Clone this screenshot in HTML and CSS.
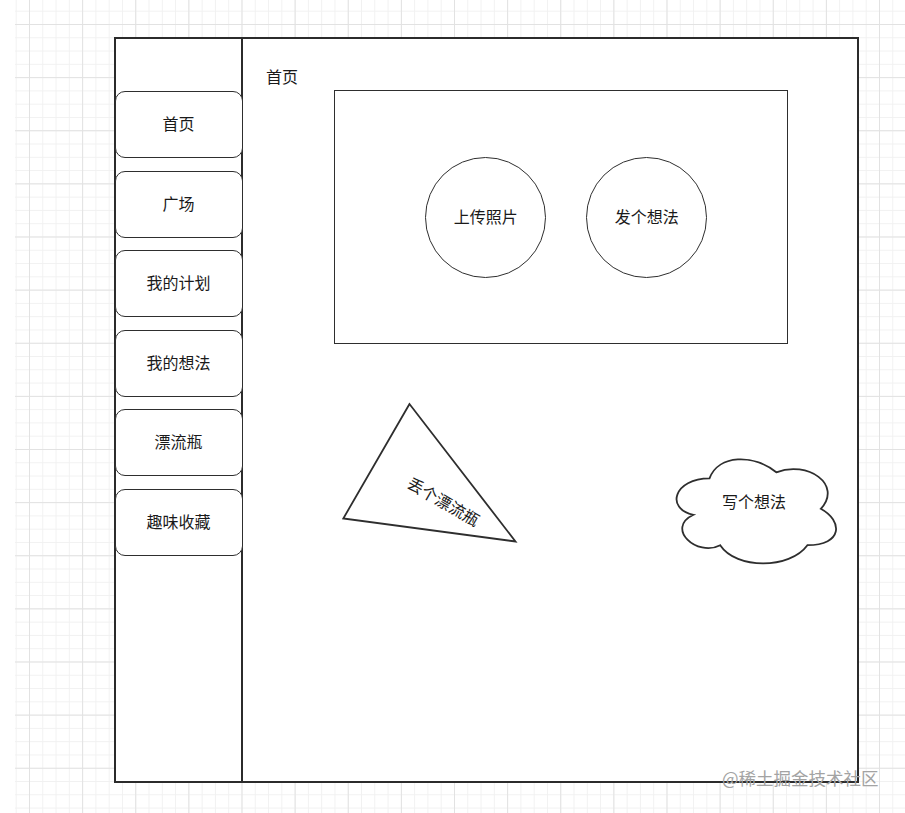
FILE: index.html
```html
<!DOCTYPE html>
<html lang="zh-CN">
<head>
<meta charset="utf-8">
<title>首页</title>
<link rel="stylesheet" href="styles.css">
</head>
<body>
<div class="canvas">
  <div class="frame">
    <nav class="sidebar">
      <div class="nav-btn">首页</div>
      <div class="nav-btn">广场</div>
      <div class="nav-btn">我的计划</div>
      <div class="nav-btn">我的想法</div>
      <div class="nav-btn">漂流瓶</div>
      <div class="nav-btn">趣味收藏</div>
    </nav>
    <main class="main">
      <div class="title">首页</div>
      <div class="panel">
        <div class="circle">上传照片</div>
        <div class="circle">发个想法</div>
      </div>
      <svg class="tri" width="185" height="150" viewBox="0 0 185 150">
        <polygon points="71.5,5 5.3,119.5 177.5,142.5" fill="#fff" stroke="#2e2e2e" stroke-width="1.8" stroke-linejoin="miter"/>
      </svg>
      <span class="tri-label">丢个漂流瓶</span>
      <svg class="cloud" width="178" height="122" viewBox="0 0 178 122">
        <path d="M44.5 30.4 C8.9 30.4 0 60.8 28.5 66.8 C0 80.2 32 109.4 55.2 97.2 C71.2 121.5 124.6 121.5 142.4 97.2 C178 97.2 178 72.9 155.8 60.8 C178 36.5 142.4 12.2 111.3 24.3 C89 6.1 53.4 6.1 44.5 30.4 Z" fill="#fff" stroke="#2e2e2e" stroke-width="1.8"/>
      </svg>
      <span class="cloud-label">写个想法</span>
    </main>
  </div>
  <div class="watermark">@稀土掘金技术社区</div>
</div>
</body>
</html>
```
FILE: styles.css
```css
html, body {
  margin: 0;
  padding: 0;
  background: #fff;
}

body {
  width: 905px;
  height: 813px;
  overflow: hidden;
  font-family: "Noto Sans CJK SC", "Noto Sans", sans-serif;
  color: #1a1a1a;
}

.canvas {
  position: relative;
  box-sizing: border-box;
  margin-left: 15px;
  width: 890px;
  height: 813px;
  padding: 37px 0 0 99px;
  background-color: #fff;
  background-image:
    linear-gradient(to right, #e2e2e2 1px, transparent 1px),
    linear-gradient(to bottom, #e2e2e2 1px, transparent 1px),
    linear-gradient(to right, #f1f1f1 1px, transparent 1px),
    linear-gradient(to bottom, #f1f1f1 1px, transparent 1px);
  background-size:
    53.14px 53.14px,
    53.14px 53.14px,
    13.285px 13.285px,
    13.285px 13.285px;
  background-position:
    14px 24px,
    14px 24px,
    14px 24px,
    14px 24px;
}

.frame {
  box-sizing: border-box;
  width: 745px;
  height: 746px;
  border: 2px solid #2b2b2b;
  background: #fff;
  display: flex;
}

.sidebar {
  box-sizing: border-box;
  width: 127px;
  flex: none;
  border-right: 2px solid #2b2b2b;
  padding-top: 52px;
  display: flex;
  flex-direction: column;
  gap: 12.6px;
}

.nav-btn {
  box-sizing: border-box;
  height: 67px;
  margin: 0 -1.5px;
  padding-bottom: 3px;
  border: 1.8px solid #2e2e2e;
  border-radius: 10px;
  background: #fff;
  display: flex;
  align-items: center;
  justify-content: center;
  font-size: 16px;
  line-height: 20px;
}

.main {
  position: relative;
  flex: 1;
}

.title {
  padding: 26px 0 2px 23px;
  font-size: 16px;
  line-height: 22px;
}

.panel {
  box-sizing: border-box;
  margin: 1.25px 0 0 91.25px;
  width: 453.5px;
  height: 253.5px;
  border: 1.8px solid #2e2e2e;
  display: flex;
  align-items: center;
  padding-left: 90px;
  gap: 40px;
}

.circle {
  box-sizing: border-box;
  width: 121px;
  height: 121px;
  padding-bottom: 2px;
  border: 1.8px solid #2e2e2e;
  border-radius: 50%;
  display: flex;
  align-items: center;
  justify-content: center;
  font-size: 16px;
  line-height: 20px;
}

.tri {
  position: absolute;
  left: 95px;
  top: 360px;
}

.tri-label {
  position: absolute;
  left: 200.5px;
  top: 461.5px;
  transform: translate(-50%, -50%) rotate(30deg);
  white-space: nowrap;
  font-size: 16px;
  line-height: 20px;
}

.cloud {
  position: absolute;
  left: 422px;
  top: 409px;
}

.cloud-label {
  position: absolute;
  left: 511px;
  top: 462px;
  transform: translate(-50%, -50%);
  white-space: nowrap;
  font-size: 16px;
  line-height: 20px;
}

.watermark {
  position: absolute;
  left: 707px;
  top: 767px;
  font-size: 17.5px;
  line-height: 22px;
  color: #a3a3a3;
  white-space: nowrap;
}
```
